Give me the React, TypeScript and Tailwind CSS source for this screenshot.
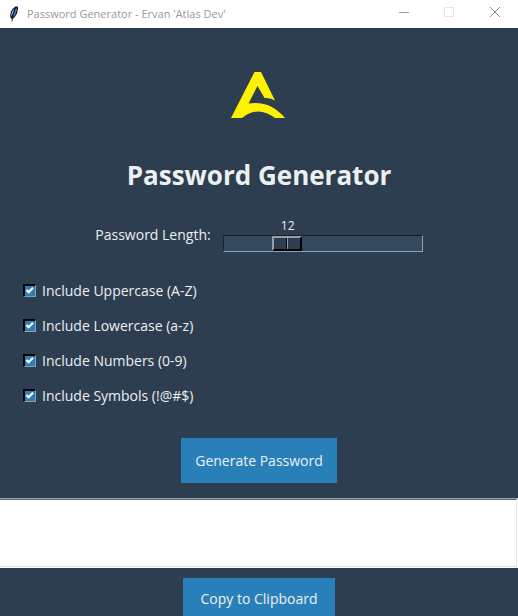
import { useState } from "react";

const options = [
  { id: "uppercase", label: "Include Uppercase (A-Z)", chars: "ABCDEFGHIJKLMNOPQRSTUVWXYZ" },
  { id: "lowercase", label: "Include Lowercase (a-z)", chars: "abcdefghijklmnopqrstuvwxyz" },
  { id: "numbers", label: "Include Numbers (0-9)", chars: "0123456789" },
  { id: "symbols", label: "Include Symbols (!@#$)", chars: "!@#$%^&*" },
];

function TitleBar() {
  return (
    <header className="flex h-7 shrink-0 items-center bg-white text-[#999999]">
      <svg className="ml-1.5 h-4 w-4" viewBox="0 0 16 16" aria-hidden="true">
        <path d="M9.5 0.6 11.8 0.4 12 3 11 7.5 8.5 11.5 6.5 13 4.6 12 4.2 9 5 5.5 7 2.5Z" fill="#111418" />
        <path d="M10.2 1.6 11 3.4 10 7 8 10.6 6.6 11.6 8 6.5Z" fill="#4378c4" />
        <path d="M9 2.6 6.2 5.6 5.2 9 5.5 10.6 7.2 7Z" fill="#8db7ee" />
        <path d="M9 4 7 8.5 6.2 12.5V15.5" fill="none" stroke="#111418" strokeWidth="0.9" />
      </svg>
      <span className="ml-[5px] grow whitespace-nowrap text-[11px]">Password Generator - Ervan 'Atlas Dev'</span>
      <div className="flex h-full">
        <button aria-label="Minimize" className="flex w-11 items-center justify-center">
          <svg width="10" height="10" viewBox="0 0 10 10" shapeRendering="crispEdges">
            <path d="M0 3.5H10" stroke="#999999" />
          </svg>
        </button>
        <button aria-label="Maximize" disabled className="flex w-[46px] items-center justify-center pb-1">
          <svg width="10" height="10" viewBox="0 0 10 10" shapeRendering="crispEdges">
            <path d="M.5.5H9.5V9.5H.5Z" fill="none" stroke="#e6e6e6" />
          </svg>
        </button>
        <button aria-label="Close" className="flex w-[46px] items-center justify-center pb-1">
          <svg width="10" height="10" viewBox="0 0 10 10">
            <path d="M0 0 10 10M10 0 0 10" stroke="#888888" />
          </svg>
        </button>
      </div>
    </header>
  );
}

function Logo() {
  return (
    <svg className="mx-auto h-12 w-14" viewBox="1 0 56 48" aria-label="Atlas Dev" role="img">
      <path
        d="M24.5 1H31L45 29.5Q41 26.5 34.5 27L27.5 15L18.5 32.5Q40 29 55 47H45Q28 34 12 47H1Z"
        fill="#fff200"
      />
    </svg>
  );
}

export default function App() {
  const [length, setLength] = useState(12);
  const [enabled, setEnabled] = useState(options.map(() => true));
  const [password, setPassword] = useState("");

  const generate = () => {
    const pool = options.filter((_, i) => enabled[i]).map((o) => o.chars).join("");
    setPassword(
      pool ? Array.from({ length }, () => pool[Math.floor(Math.random() * pool.length)]).join("") : ""
    );
  };

  return (
    <div className="flex h-screen flex-col overflow-hidden bg-[#2c3e50] font-['Open_Sans','Noto_Sans',sans-serif] text-sm text-[#ecf0f1]">
      <TitleBar />
      <main className="flex shrink-0 flex-col pt-[43px]">
        <Logo />
        <h1 className="mt-9 text-center text-[26px] leading-10 font-bold">Password Generator</h1>

        <div className="mt-[23px] flex justify-center gap-3">
          <label htmlFor="length" className="mt-[7px] leading-5">
            Password Length:
          </label>
          <div className="w-[200px]">
            <div className="flex h-[17px] px-px text-xs leading-4">
              <output htmlFor="length" className="w-[128px] text-center">
                {length}
              </output>
            </div>
            <input
              id="length"
              type="range"
              min={4}
              max={32}
              value={length}
              onChange={(e) => setLength(Number(e.target.value))}
              className="block h-[17px] w-full appearance-none border border-t-[#18222c] border-r-[#959ea7] border-b-[#959ea7] border-l-[#18222c] bg-[#34495e] [&::-webkit-slider-thumb]:h-[15px] [&::-webkit-slider-thumb]:w-[30px] [&::-webkit-slider-thumb]:appearance-none [&::-webkit-slider-thumb]:border-2 [&::-webkit-slider-thumb]:border-t-[#959ea7] [&::-webkit-slider-thumb]:border-r-black [&::-webkit-slider-thumb]:border-b-black [&::-webkit-slider-thumb]:border-l-[#959ea7] [&::-webkit-slider-thumb]:bg-[linear-gradient(to_right,#2c3e50_12px,#000_12px,#000_13px,#959ea7_13px,#959ea7_14px,#2c3e50_14px)]"
            />
          </div>
        </div>

        <fieldset className="mt-[21px] flex flex-col items-start px-[23px]">
          {options.map((option, i) => (
            <label key={option.id} className="flex h-[35px] items-center gap-1.5">
              <span className="grid">
                <input
                  type="checkbox"
                  checked={enabled[i]}
                  onChange={() => setEnabled(enabled.map((v, j) => (j === i ? !v : v)))}
                  className="peer col-start-1 row-start-1 h-[13px] w-[13px] appearance-none border-t-2 border-r border-b border-l-2 border-t-black border-r-[#959ea7] border-b-[#959ea7] border-l-black bg-[#2980b9]"
                />
                <svg
                  className="pointer-events-none invisible col-start-1 row-start-1 h-[13px] w-[13px] peer-checked:visible"
                  viewBox="0 0 13 13"
                  aria-hidden="true"
                >
                  <path d="M3.5 6 5.6 8.2 10 3.8" fill="none" stroke="#fff" strokeWidth="2.2" />
                </svg>
              </span>
              {option.label}
            </label>
          ))}
        </fieldset>

        <button onClick={generate} className="mx-auto mt-[25px] h-[45px] bg-[#2980b9] px-3.5">
          Generate Password
        </button>
        <div className="mt-[15px] border-t border-r border-b border-t-[#a0a0a0] border-r-white border-b-white">
          <textarea
            aria-label="Generated password"
            value={password}
            readOnly
            className="block h-[68px] w-full resize-none border-t border-r border-b border-t-[#696969] border-r-[#e3e3e3] border-b-[#e3e3e3] bg-white p-1 text-black outline-none"
          />
        </div>
        <button
          onClick={() => navigator.clipboard?.writeText(password)}
          className="mx-auto mt-2.5 h-[45px] bg-[#2980b9] px-[17px] pb-1"
        >
          Copy to Clipboard
        </button>
      </main>
    </div>
  );
}
